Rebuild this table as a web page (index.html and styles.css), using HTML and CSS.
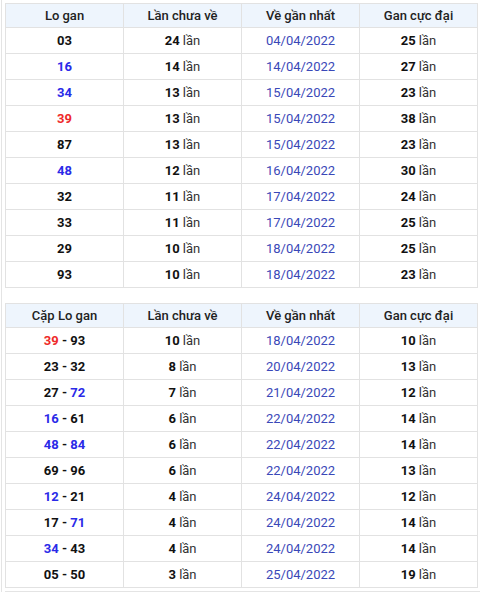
FILE: index.html
```html
<!DOCTYPE html>
<html lang="vi">
<head>
<meta charset="utf-8">
<link rel="stylesheet" href="styles.css">
</head>
<body>
<div class="page">
  <table class="stats">
    <thead>
      <tr><th>Lo gan</th><th>Lần chưa về</th><th>Về gần nhất</th><th>Gan cực đại</th></tr>
    </thead>
    <tbody>
      <tr><td><b>03</b></td><td><b>24</b> lần</td><td class="date">04/04/2022</td><td><b>25</b> lần</td></tr>
      <tr><td><b class="blue">16</b></td><td><b>14</b> lần</td><td class="date">14/04/2022</td><td><b>27</b> lần</td></tr>
      <tr><td><b class="blue">34</b></td><td><b>13</b> lần</td><td class="date">15/04/2022</td><td><b>23</b> lần</td></tr>
      <tr><td><b class="red">39</b></td><td><b>13</b> lần</td><td class="date">15/04/2022</td><td><b>38</b> lần</td></tr>
      <tr><td><b>87</b></td><td><b>13</b> lần</td><td class="date">15/04/2022</td><td><b>23</b> lần</td></tr>
      <tr><td><b class="blue">48</b></td><td><b>12</b> lần</td><td class="date">16/04/2022</td><td><b>30</b> lần</td></tr>
      <tr><td><b>32</b></td><td><b>11</b> lần</td><td class="date">17/04/2022</td><td><b>24</b> lần</td></tr>
      <tr><td><b>33</b></td><td><b>11</b> lần</td><td class="date">17/04/2022</td><td><b>25</b> lần</td></tr>
      <tr><td><b>29</b></td><td><b>10</b> lần</td><td class="date">18/04/2022</td><td><b>25</b> lần</td></tr>
      <tr><td><b>93</b></td><td><b>10</b> lần</td><td class="date">18/04/2022</td><td><b>23</b> lần</td></tr>
    </tbody>
  </table>

  <table class="stats second">
    <thead>
      <tr><th>Cặp Lo gan</th><th>Lần chưa về</th><th>Về gần nhất</th><th>Gan cực đại</th></tr>
    </thead>
    <tbody>
      <tr><td><b class="red">39</b> <b>-</b> <b>93</b></td><td><b>10</b> lần</td><td class="date">18/04/2022</td><td><b>10</b> lần</td></tr>
      <tr><td><b>23</b> <b>-</b> <b>32</b></td><td><b>8</b> lần</td><td class="date">20/04/2022</td><td><b>13</b> lần</td></tr>
      <tr><td><b>27</b> <b>-</b> <b class="blue">72</b></td><td><b>7</b> lần</td><td class="date">21/04/2022</td><td><b>12</b> lần</td></tr>
      <tr><td><b class="blue">16</b> <b>-</b> <b>61</b></td><td><b>6</b> lần</td><td class="date">22/04/2022</td><td><b>14</b> lần</td></tr>
      <tr><td><b class="blue">48</b> <b>-</b> <b class="blue">84</b></td><td><b>6</b> lần</td><td class="date">22/04/2022</td><td><b>14</b> lần</td></tr>
      <tr><td><b>69</b> <b>-</b> <b>96</b></td><td><b>6</b> lần</td><td class="date">22/04/2022</td><td><b>13</b> lần</td></tr>
      <tr><td><b class="blue">12</b> <b>-</b> <b>21</b></td><td><b>4</b> lần</td><td class="date">24/04/2022</td><td><b>12</b> lần</td></tr>
      <tr><td><b>17</b> <b>-</b> <b class="blue">71</b></td><td><b>4</b> lần</td><td class="date">24/04/2022</td><td><b>14</b> lần</td></tr>
      <tr><td><b class="blue">34</b> <b>-</b> <b>43</b></td><td><b>4</b> lần</td><td class="date">24/04/2022</td><td><b>14</b> lần</td></tr>
      <tr><td><b>05</b> <b>-</b> <b>50</b></td><td><b>3</b> lần</td><td class="date">25/04/2022</td><td><b>19</b> lần</td></tr>
    </tbody>
  </table>
  <div class="foot"></div>
</div>
</body>
</html>
```

FILE: styles.css
```css
html, body {
  margin: 0;
  padding: 0;
  background: #ffffff;
}

body {
  font-family: Roboto, "Liberation Sans", Arial, sans-serif;
  font-size: 13px;
  color: #222222;
}

.page {
  margin-left: 1px;
  border-left: 1px solid #e4e4e4;
  padding: 3px 0 0 3px;
}

.stats {
  width: 473px;
  table-layout: fixed;
  border-collapse: collapse;
}

.stats.second {
  margin-top: 15px;
}

.stats th,
.stats td {
  border: 1px solid #e2e2e2;
  text-align: center;
  padding: 0;
}

.stats th {
  height: 23px;
  background: #eef5fd;
  font-weight: 500;
  color: #222222;
}

.stats td {
  height: 25px;
  color: #333333;
}

.stats td b {
  font-weight: 700;
  color: #111111;
}

.stats td b.blue {
  color: #2a2ae8;
}

.stats td b.red {
  color: #ee2a2a;
}

.stats td.date {
  color: #3a48b8;
}

.foot {
  height: 3px;
  border-bottom: 1px solid #e4e4e4;
}
```
